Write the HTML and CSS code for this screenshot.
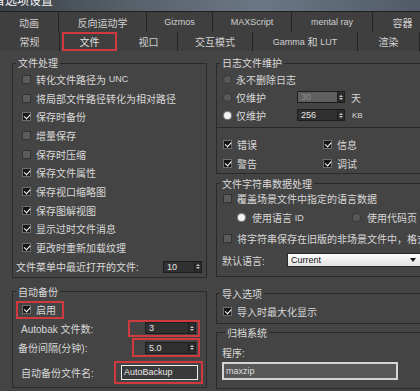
FILE: index.html
```html
<!DOCTYPE html>
<html>
<head>
<meta charset="utf-8">
<link rel="stylesheet" href="styles.css">
</head>
<body>
<div class="titlebar"><span class="title">首选项设置</span></div>
<div class="tabs">
  <div class="tabrow r1">
    <div class="tab w59">动画</div>
    <div class="tab w88">反向运动学</div>
    <div class="tab w66"><span class="lat">Gizmos</span></div>
    <div class="tab w79"><span class="lat">MAXScript</span></div>
    <div class="tab w81"><span class="lat">mental ray</span></div>
    <div class="tab w60">容器</div>
  </div>
  <div class="tabrow r2">
    <div class="tab w60">常规</div>
    <div class="tab w60 sel"><span class="redtab">文件</span></div>
    <div class="tab w58">视口</div>
    <div class="tab w75">交互模式</div>
    <div class="tab w105"><span class="lat">Gamma</span>&nbsp;和&nbsp;<span class="lat">LUT</span></div>
    <div class="tab w62">渲染</div>
  </div>
</div>
<div class="content">
  <div class="col left">
    <fieldset class="grp g-file">
      <legend>文件处理</legend>
      <div class="rows">
        <div class="row cbrow"><span class="chk"></span>转化文件路径为&nbsp;<span class="lat">UNC</span></div>
        <div class="row cbrow"><span class="chk"></span>将局部文件路径转化为相对路径</div>
        <div class="row cbrow"><span class="chk on"></span>保存时备份</div>
        <div class="row cbrow"><span class="chk"></span>增量保存</div>
        <div class="row cbrow"><span class="chk"></span>保存时压缩</div>
        <div class="row cbrow"><span class="chk on"></span>保存文件属性</div>
        <div class="row cbrow"><span class="chk on"></span>保存视口缩略图</div>
        <div class="row cbrow"><span class="chk on"></span>保存图解视图</div>
        <div class="row cbrow"><span class="chk on"></span>显示过时文件消息</div>
        <div class="row cbrow"><span class="chk on"></span>更改时重新加载纹理</div>
        <div class="row recent">文件菜单中最近打开的文件:<span class="spin s-recent"><span class="box">10</span><span class="arr"></span></span></div>
      </div>
    </fieldset>
    <fieldset class="grp g-auto">
      <legend>自动备份</legend>
      <div class="arow a1"><span class="red red-en"><span class="chk on"></span>启用</span></div>
      <div class="arow a2"><span class="alabel">Autobak 文件数:</span><span class="red red-n"><span class="spin"><span class="box">3</span><span class="arr"></span></span></span></div>
      <div class="arow a3"><span class="alabel l3">备份间隔(分钟):</span><span class="red red-i"><span class="spin"><span class="box">5.0</span><span class="arr"></span></span></span></div>
      <div class="arow a4"><span class="alabel">自动备份文件名:</span><span class="red red-f"><span class="txt">AutoBackup</span></span></div>
    </fieldset>
  </div>
  <div class="col right">
    <fieldset class="grp g-log">
      <legend>日志文件维护</legend>
      <div class="lrows">
        <div class="row rrow"><span class="rad"></span>永不删除日志</div>
        <div class="row rrow"><span class="rad"></span><span class="keep">仅维护</span><span class="spin s-log dis"><span class="box">30</span><span class="arr"></span></span><span class="unit">天</span></div>
        <div class="row rrow"><span class="rad on"></span><span class="keep">仅维护</span><span class="spin s-log"><span class="box">256</span><span class="arr"></span></span><span class="unit lat">KB</span></div>
      </div>
      <div class="divider"></div>
      <div class="cbgrid">
        <div class="row gcell"><span class="chk on"></span>错误</div>
        <div class="row gcell"><span class="chk on"></span>信息</div>
        <div class="row gcell"><span class="chk on"></span>警告</div>
        <div class="row gcell"><span class="chk on"></span>调试</div>
      </div>
    </fieldset>
    <fieldset class="grp g-str">
      <legend>文件字符串数据处理</legend>
      <div class="row srow s1"><span class="chk"></span>覆盖场景文件中指定的语言数据</div>
      <div class="row srow s2"><span class="ropt"><span class="rad on"></span>使用语言&nbsp;<span class="lat">ID</span></span><span class="ropt"><span class="rad"></span>使用代码页</span></div>
      <div class="row srow s3"><span class="chk"></span>将字符串保存在旧版的非场景文件中，格式</div>
      <div class="row srow s4"><span class="dlabel">默认语言:</span><span class="drop"><span class="lat">Current</span><span class="darr"></span></span></div>
    </fieldset>
    <fieldset class="grp g-imp">
      <legend>导入选项</legend>
      <div class="row irow"><span class="chk on"></span>导入时最大化显示</div>
    </fieldset>
    <fieldset class="grp g-arc">
      <legend>归档系统</legend>
      <div class="row prow">程序:</div>
      <div class="ptxt"><span class="lat">maxzip</span></div>
    </fieldset>
  </div>
</div>
</body>
</html>
```
FILE: styles.css
```css
* { box-sizing: border-box; }
html, body { margin: 0; padding: 0; }
body {
  width: 420px;
  height: 391px;
  overflow: hidden;
  background: #444444;
  font-family: "Liberation Sans", "Noto Sans CJK SC", sans-serif;
  font-size: 10px;
  color: #d8d8d8;
}
.lat { font-size: 9px; }

.titlebar {
  height: 12px;
  overflow: hidden;
  background: linear-gradient(90deg, #3b4047 0%, #566069 30%, #6c7785 62%, #505b67 100%);
  border-bottom: 1px solid #1e1e1e;
}
.title {
  display: block;
  margin-top: -7px;
  margin-left: -7px;
  font-size: 12px;
  line-height: 14px;
  color: #f2f2f2;
  font-family: "Noto Sans CJK SC", sans-serif;
}

.tabs { background: #3f3f3f; }
.tabrow { display: flex; height: 20px; }
.tabrow.r2 { height: 19px; }
.tab {
  flex: none;
  display: flex;
  align-items: center;
  justify-content: center;
  border-right: 1px solid #232323;
  color: #d0d0d0;
  white-space: nowrap;
}
.w58 { width: 58px; }
.w59 { width: 59px; }
.w60 { width: 60px; }
.w62 { width: 62px; }
.w66 { width: 66px; }
.w75 { width: 75px; }
.w79 { width: 79px; }
.w81 { width: 81px; }
.w88 { width: 88px; }
.w105 { width: 105px; }
.sel { padding: 0 2px; border-right-color: transparent; }
.redtab {
  width: 100%;
  height: 100%;
  display: flex;
  align-items: center;
  justify-content: center;
  border: 2px solid #cf3a3e;
  color: #e0e0e0;
}

.content {
  display: flex;
  padding: 6px 0 0 12px;
}
.col { flex: none; display: flex; flex-direction: column; }
.left { width: 195px; }
.right { width: 214px; margin-left: 9px; }

.grp {
  margin: 0;
  padding: 0;
  min-width: 0;
  border: 1px solid #2a2a2a;
}
.grp legend {
  padding: 0 2px;
  margin-left: 3px;
  line-height: 12px;
  height: 12px;
  font-size: 10px;
  color: #dadada;
  font-family: "Noto Sans CJK SC", sans-serif;
}
.row {
  display: flex;
  align-items: center;
  white-space: nowrap;
}

.chk {
  flex: none;
  width: 9px;
  height: 9px;
  margin-right: 5px;
  background: #5b5b5b;
  border: 1px solid #333;
  position: relative;
}
.chk.on {
  background: #151515;
  border-color: #6e6e6e;
}
.chk.on::after {
  content: "";
  position: absolute;
  left: 1px;
  top: 1px;
  width: 5px;
  height: 2.5px;
  border-left: 1.6px solid #fff;
  border-bottom: 1.6px solid #fff;
  transform: rotate(-48deg);
}
.rad {
  flex: none;
  width: 7px;
  height: 7px;
  border-radius: 50%;
  background: #575757;
  box-shadow: 0 0 0 1px #3a3a3a;
  margin-right: 5px;
}
.rad.on {
  background: #f4f4f4;
  box-shadow: 0 0 1px 1px #8a8a8a;
}

.spin { flex: none; display: flex; height: 12px; }
.spin .box {
  width: 42px;
  height: 12px;
  background: #303030;
  border: 1px solid #1d1d1d;
  border-right: none;
  color: #e6e6e6;
  font-size: 9px;
  line-height: 10px;
  padding-left: 3px;
}
.spin .arr {
  width: 8px;
  height: 12px;
  background: #2c2c2c;
  border: 1px solid #1d1d1d;
  display: flex;
  flex-direction: column;
  align-items: center;
  justify-content: center;
  gap: 1px;
}
.spin .arr::before {
  content: "";
  border-left: 2px solid transparent;
  border-right: 2px solid transparent;
  border-bottom: 2px solid #c4c4c4;
}
.spin .arr::after {
  content: "";
  border-left: 2px solid transparent;
  border-right: 2px solid transparent;
  border-top: 2px solid #c4c4c4;
}
.spin.dis .box { background: #5f5f5f; color: #8f8f8f; }

/* left group 1 */
.rows { padding-top: 1px; }
.cbrow { height: 18.7px; padding-left: 9px; }
.recent { height: 20px; padding-left: 3px; padding-right: 4px; }
.recent .spin { margin-left: auto; }
.s-recent .box { width: 31px; }

/* left group 2 */
.g-auto { margin-top: 8px; padding-bottom: 3px; }
.arow { display: flex; align-items: center; white-space: nowrap; padding-right: 6px; }
.a1 { height: 21px; padding-top: 3px; padding-left: 3px; }
.a2 { height: 19px; }
.a3 { height: 20px; }
.a4 { height: 23px; margin-top: 3px; padding-right: 3px; }
.alabel { padding-left: 8px; }
.alabel.l3 { padding-left: 5px; }
.red {
  display: flex;
  align-items: center;
  border: 2px solid #cf3a3e;
}
.red-en { height: 18px; padding: 0 6px 0 4px; }
.red-n { margin-left: auto; width: 72px; height: 17px; justify-content: flex-end; padding-right: 2px; }
.red-n .box, .red-i .box { width: 43px; }
.red-i { margin-left: auto; width: 68px; height: 19px; justify-content: flex-end; padding-right: 2px; }
.red-f { margin-left: auto; width: 89px; height: 23px; padding-left: 5px; }
.txt {
  width: 77px;
  height: 15px;
  border: 1px solid #f0f0f0;
  background: #3a3a3a;
  color: #e8e8e8;
  font-size: 9px;
  line-height: 13px;
  padding-left: 2px;
}

/* right: log */
.lrows { padding-top: 1px; }
.rrow { height: 18px; padding-left: 7px; }
.keep { width: 61px; }
.s-log .box { width: 40px; }
.unit { margin-left: 6px; }
.unit.lat { margin-left: 7px; font-size: 8px; }
.divider { margin-top: 3px; border-top: 1px solid #2a2a2a; }
.cbgrid {
  display: grid;
  grid-template-columns: 100px 100px;
  padding-top: 6.5px;
  padding-left: 6px;
}
.gcell { height: 19px; }

/* right: strings */
.g-str { margin-top: 4px; padding-bottom: 5px; }
.srow { padding-left: 6px; }
.s1 { height: 18px; }
.s2 { height: 20px; padding-left: 21px; }
.ropt { display: flex; align-items: center; }
.ropt:first-child { width: 115px; }
.ropt .rad { margin-right: 7px; }
.s3 { height: 22px; }
.s4 { height: 21px; padding-left: 5px; }
.dlabel { width: 65px; }
.drop {
  flex: none;
  width: 134px;
  height: 14px;
  display: flex;
  align-items: center;
  padding: 0 4px 0 3px;
  background: linear-gradient(#ffffff, #e2e2e2);
  border: 1px solid #2a2a2a;
  color: #111;
}
.darr {
  margin-left: auto;
  border-left: 3px solid transparent;
  border-right: 3px solid transparent;
  border-top: 4px solid #111;
}

/* right: import */
.g-imp { margin-top: 11px; padding: 2px 0; }
.irow { height: 19px; padding-left: 6px; }

/* right: archive */
.g-arc { margin-top: 3px; padding: 5px 0 8px 5px; }
.prow { height: 18px; }
.ptxt {
  width: 176px;
  height: 18px;
  border: 2px solid #d4d4d4;
  background: #585858;
  color: #dcdcdc;
  display: flex;
  align-items: center;
  padding-left: 2px;
}
```
